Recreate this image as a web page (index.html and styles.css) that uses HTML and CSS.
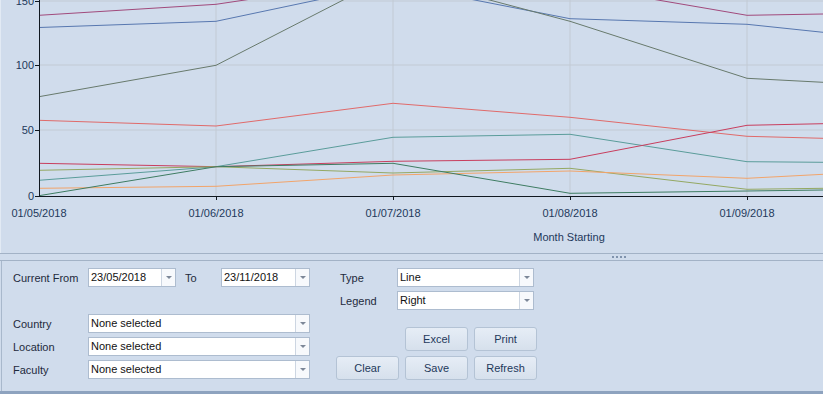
FILE: index.html
```html
<!DOCTYPE html>
<html lang="en">
<head>
    <meta charset="UTF-8">
    <title>Enrolment Chart</title>
    <link rel="stylesheet" href="styles.css">
</head>
<body>

    <!-- Chart area -->
    <div class="chart-panel">
        <svg class="chart" width="823" height="253" viewBox="0 0 823 253">
            <!-- grid -->
            <g class="grid">
                <line x1="39" y1="1" x2="823" y2="1"/>
                <line x1="39" y1="65" x2="823" y2="65"/>
                <line x1="39" y1="130" x2="823" y2="130"/>
                <line x1="216" y1="0" x2="216" y2="196"/>
                <line x1="393" y1="0" x2="393" y2="196"/>
                <line x1="570" y1="0" x2="570" y2="196"/>
                <line x1="747" y1="0" x2="747" y2="196"/>
            </g>

            <!-- series -->
            <g class="series">
                <polyline stroke="#a14a7c" points="39,15.3 216,4.3 393,-22 570,-15 747,15.3 823,14"/>
                <polyline stroke="#5878b0" points="39,27.5 216,21.3 393,-16 570,18.7 747,24.3 823,32.3"/>
                <polyline stroke="#687a6c" points="39,96.7 216,65.3 393,-25.6 570,21.3 747,78.3 823,82.3"/>
                <polyline stroke="#e06a6a" points="39,120.3 216,126 393,103.3 570,117.3 747,136.3 823,138.3"/>
                <polyline stroke="#5a9c9a" points="39,180.3 216,166.7 393,137.3 570,134.3 747,161.7 823,162.3"/>
                <polyline stroke="#c83e5e" points="39,163.3 216,166.7 393,161.3 570,159.3 747,125.3 823,123.7"/>
                <polyline stroke="#94a862" points="39,170.3 216,166.7 393,173 570,168.3 747,189.3 823,188.3"/>
                <polyline stroke="#f2a46a" points="39,188.3 216,186.3 393,175 570,171 747,178.3 823,174.3"/>
                <polyline stroke="#3e7c62" points="39,195.7 216,166.7 393,163.3 570,193.3 747,191 823,190"/>
            </g>

            <!-- axes -->
            <g class="axis">
                <line x1="39.5" y1="0" x2="39.5" y2="197"/>
                <line x1="39" y1="196.5" x2="823" y2="196.5"/>
                <line x1="35" y1="1.5" x2="39" y2="1.5"/>
                <line x1="35" y1="65.5" x2="39" y2="65.5"/>
                <line x1="35" y1="130.5" x2="39" y2="130.5"/>
                <line x1="35" y1="196.5" x2="39" y2="196.5"/>
                <line x1="216.5" y1="196" x2="216.5" y2="200"/>
                <line x1="393.5" y1="196" x2="393.5" y2="200"/>
                <line x1="570.5" y1="196" x2="570.5" y2="200"/>
                <line x1="747.5" y1="196" x2="747.5" y2="200"/>
            </g>

            <g class="labels y-labels">
                <text x="34" y="5">150</text>
                <text x="34" y="69">100</text>
                <text x="34" y="134">50</text>
                <text x="34" y="200">0</text>
            </g>
            <g class="labels x-labels">
                <text x="39" y="217">01/05/2018</text>
                <text x="216" y="217">01/06/2018</text>
                <text x="393" y="217">01/07/2018</text>
                <text x="570" y="217">01/08/2018</text>
                <text x="747" y="217">01/09/2018</text>
                <text x="569" y="241">Month Starting</text>
            </g>
        </svg>
    </div>

    <!-- Splitter -->
    <div class="splitter">
        <span class="grip"><i></i><i></i><i></i><i></i></span>
    </div>

    <!-- Filters -->
    <div class="filter-panel">
        <div class="filter-left">
            <div class="row">
                <label class="label">Current From</label>
                <div class="combo date-from">
                    <span class="combo-text">23/05/2018</span>
                    <span class="combo-btn"></span>
                </div>
                <label class="label to-label">To</label>
                <div class="combo date-to">
                    <span class="combo-text">23/11/2018</span>
                    <span class="combo-btn"></span>
                </div>
            </div>

            <div class="stack">
                <div class="row">
                    <label class="label">Country</label>
                    <div class="combo wide">
                        <span class="combo-text">None selected</span>
                        <span class="combo-btn"></span>
                    </div>
                </div>
                <div class="row">
                    <label class="label">Location</label>
                    <div class="combo wide">
                        <span class="combo-text">None selected</span>
                        <span class="combo-btn"></span>
                    </div>
                </div>
                <div class="row">
                    <label class="label">Faculty</label>
                    <div class="combo wide">
                        <span class="combo-text">None selected</span>
                        <span class="combo-btn"></span>
                    </div>
                </div>
            </div>
        </div>

        <div class="filter-right">
            <div class="row">
                <label class="label short">Type</label>
                <div class="combo chart-type">
                    <span class="combo-text">Line</span>
                    <span class="combo-btn"></span>
                </div>
            </div>
            <div class="row">
                <label class="label short">Legend</label>
                <div class="combo chart-type">
                    <span class="combo-text">Right</span>
                    <span class="combo-btn"></span>
                </div>
            </div>

            <div class="buttons">
                <span></span>
                <button>Excel</button>
                <button>Print</button>
                <button>Clear</button>
                <button>Save</button>
                <button>Refresh</button>
            </div>
        </div>
    </div>

    <div class="footer-band"></div>

</body>
</html>
```

FILE: styles.css
```css
/* Whole window */
body {
    margin: 0;
    width: 823px;
    height: 394px;
    overflow: hidden;
    background-color: #d0dcec;
    font-family: "Liberation Sans", Arial, sans-serif;
    font-size: 11px;
    color: #1e2a3c;
}

/* Chart area */
.chart-panel {
    height: 253px;
    box-sizing: border-box;
    border-left: 1px solid #e2eaf4;
}

.chart {
    display: block;
    margin-left: -1px;
}

.grid line {
    stroke: #c2cad4;
    stroke-width: 1;
}

.series polyline {
    fill: none;
    stroke-width: 1;
}

.axis line {
    stroke: #101820;
    stroke-width: 1;
}

.labels text {
    font-family: "Liberation Sans", Arial, sans-serif;
    font-size: 11px;
    fill: #1e395b;
}

.y-labels text {
    text-anchor: end;
}

.x-labels text {
    text-anchor: middle;
}

/* Splitter between chart and filters */
.splitter {
    height: 6px;
    border-top: 1px solid #a2b2c6;
    border-bottom: 1px solid #a2b2c6;
    display: flex;
    align-items: center;
    padding-left: 612px;
}

.grip {
    display: flex;
    gap: 2px;
}

.grip i {
    width: 2px;
    height: 2px;
    background-color: #8093ad;
}

/* Filter panel */
.filter-panel {
    height: 130px;
    box-sizing: border-box;
    margin-left: 1px;
    border-left: 1px solid #a8b8cc;
    padding: 7px 0 0 11px;
    display: flex;
    gap: 26px;
}

.filter-left,
.filter-right {
    display: flex;
    flex-direction: column;
    gap: 4px;
}

.row {
    display: flex;
    align-items: center;
    height: 19px;
}

.stack {
    margin-top: 23px;
    display: flex;
    flex-direction: column;
    gap: 4px;
}

.label {
    width: 75px;
    flex-shrink: 0;
    color: #1e2a3c;
}

.label.to-label {
    width: 36px;
    margin-left: 9px;
}

.label.short {
    width: 57px;
    padding-left: 4px;
}

/* Combo / date edits */
.combo {
    display: flex;
    height: 19px;
    box-sizing: border-box;
    border: 1px solid #adbccf;
    background-color: #ffffff;
}

.combo.date-from {
    width: 88px;
}

.combo.date-to {
    width: 89px;
}

.combo.wide {
    width: 222px;
}

.combo.chart-type {
    width: 137px;
}

.combo-text {
    flex: 1;
    padding-left: 2px;
    line-height: 17px;
    color: #111;
    white-space: nowrap;
}

.combo-btn {
    width: 13px;
    border-left: 1px solid #cdd6e2;
    background-color: #f7f9fc;
    display: flex;
    align-items: center;
    justify-content: center;
}

.combo-btn::after {
    content: "";
    border-left: 3px solid transparent;
    border-right: 3px solid transparent;
    border-top: 3px solid #7c8798;
}

/* Action buttons */
.buttons {
    margin-top: 13px;
    display: grid;
    grid-template-columns: 63px 63px 63px;
    grid-auto-rows: 24px;
    column-gap: 6px;
    row-gap: 5px;
}

button {
    font-family: "Liberation Sans", Arial, sans-serif;
    font-size: 11px;
    color: #1e395b;
    background: linear-gradient(#e6edf6, #d6e0ec);
    border: 1px solid #b4c3d5;
    border-radius: 3px;
    padding: 0;
}

.footer-band {
    height: 4px;
    background-color: #8ea3bf;
}
```
